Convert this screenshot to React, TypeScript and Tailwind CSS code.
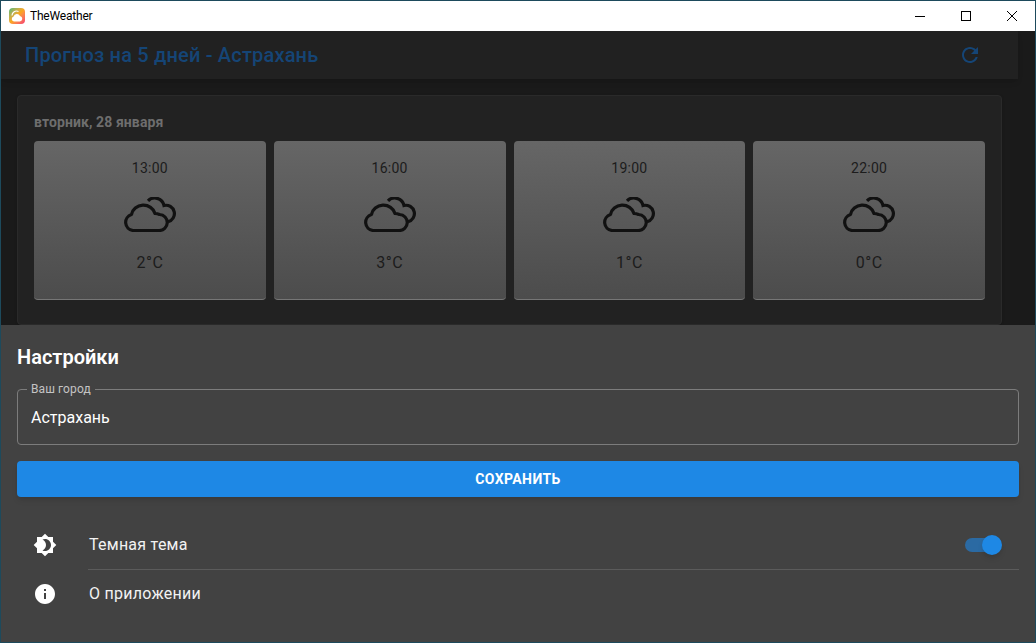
import React from 'react';

const forecast = [
  { time: '13:00', temp: '2°C' },
  { time: '16:00', temp: '3°C' },
  { time: '19:00', temp: '1°C' },
  { time: '22:00', temp: '0°C' },
];

function CloudsIcon() {
  return (
    <svg width="54" height="35" viewBox="0 0 54 35" fill="none" stroke="#111" strokeWidth="3.2">
      <path d="M10 33.5H36A8 8 0 0 0 36.5 17.5C35 16.8 33.5 16.5 32 16.5A12 11 0 0 0 8.5 17.5A8.2 8.2 0 0 0 10 33.5Z" strokeLinejoin="round" />
      <path d="M25 3.8A9.5 9.5 0 0 1 41 8.5A8 8 0 0 1 45 24.8" strokeLinecap="butt" />
    </svg>
  );
}

function AppLogo() {
  return (
    <div className="flex h-4 w-4 items-center justify-center rounded-[4px] bg-gradient-to-br from-[#2fb574] via-[#fba61b] to-[#f5326e]">
      <svg width="14" height="12" viewBox="0 0 14 12" fill="white">
        <path d="M2 5.5A4.5 4.5 0 0 1 8.5 1.5" fill="none" stroke="white" strokeWidth="1.2" />
        <path d="M4 11.5A2.5 2.5 0 0 1 3.6 6.6A3.4 3.4 0 0 1 10 6A2.8 2.8 0 0 1 10 11.5Z" />
      </svg>
    </div>
  );
}

function TitleBar() {
  return (
    <div className="flex h-[30px] shrink-0 items-center bg-white pl-2 text-black">
      <AppLogo />
      <span className="ml-[5px] text-xs tracking-[-0.2px]">TheWeather</span>
      <div className="ml-auto flex h-full">
        <div className="flex w-[46px] items-center justify-center">
          <div className="h-px w-[10px] bg-black" />
        </div>
        <div className="flex w-[46px] items-center justify-center">
          <div className="h-[10px] w-[10px] border border-black" />
        </div>
        <div className="flex w-[46px] items-center justify-center">
          <svg width="10" height="10" viewBox="0 0 10 10" stroke="black" strokeWidth="1">
            <path d="M0 0L10 10M10 0L0 10" />
          </svg>
        </div>
      </div>
    </div>
  );
}

function Forecast() {
  return (
    <div className="flex-1 overflow-hidden bg-[#1a1a1a]">
      <div className="mr-[17px] flex h-12 items-center justify-between bg-[#212121] pl-6 pr-9 shadow-md">
        <h1 className="text-xl font-medium tracking-[0.18px] text-[#154576]">Прогноз на 5 дней - Астрахань</h1>
        <svg width="24" height="24" viewBox="0 0 24 24" fill="#154576">
          <path d="M17.65 6.35C16.2 4.9 14.21 4 12 4c-4.42 0-7.99 3.58-7.99 8s3.57 8 7.99 8c3.73 0 6.84-2.55 7.73-6h-2.08c-.82 2.33-3.04 4-5.65 4-3.31 0-6-2.69-6-6s2.69-6 6-6c1.66 0 3.14.69 4.22 1.78L13 11h7V4l-2.35 2.35z" />
        </svg>
      </div>
      <div className="ml-4 mr-[33px] mt-4 rounded border border-[#2a2a2a] bg-[#222222] px-4 pb-6 pt-4 shadow">
        <div className="text-sm font-bold leading-5 tracking-[0.1px] text-[#6e6e6e]">вторник, 28 января</div>
        <div className="mt-[9px] grid grid-cols-4 gap-2">
          {forecast.map((item) => (
            <div
              key={item.time}
              className="flex h-[159px] flex-col items-center rounded border-b border-[#767676] bg-gradient-to-b from-[#666666] to-[#4c4c4c] pt-4 text-[#1c1c1c]"
            >
              <div className="text-sm leading-[22px] tracking-[0.25px]">{item.time}</div>
              <div className="mt-[18px]">
                <CloudsIcon />
              </div>
              <div className="mt-[19px] text-base leading-6 tracking-[0.5px]">{item.temp}</div>
            </div>
          ))}
        </div>
      </div>
    </div>
  );
}

function SettingsSheet() {
  return (
    <div className="absolute bottom-0 left-0 right-0 h-[317px] bg-[#424242] px-4 text-white">
      <h2 className="mt-[18px] text-xl font-semibold leading-[28px]">Настройки</h2>
      <fieldset className="mt-[11px] h-[63px] rounded border border-[#7c7c7c] px-[9px]">
        <legend className="px-1 text-xs leading-[14px] tracking-[0.1px] text-[#c4c4c4]">Ваш город</legend>
        <div className="pl-1 pt-[10px] text-base leading-6">Астрахань</div>
      </fieldset>
      <button className="mt-4 h-9 w-full rounded bg-[#1e88e5] text-sm font-bold tracking-[0.4px] text-white shadow-md">
        СОХРАНИТЬ
      </button>
      <div className="mt-6 flex h-12 items-center">
        <div className="w-[72px] pl-4">
          <svg width="24" height="24" viewBox="0 0 24 24" fill="white">
            <path d="M20 8.69V4h-4.69L12 .69 8.69 4H4v4.69L.69 12 4 15.31V20h4.69L12 23.31 15.31 20H20v-4.69L23.31 12 20 8.69zM12 18c-.89 0-1.74-.2-2.5-.55C11.56 16.5 13 14.42 13 12s-1.44-4.5-3.5-5.45C10.26 6.2 11.11 6 12 6c3.31 0 6 2.69 6 6s-2.69 6-6 6z" />
          </svg>
        </div>
        <span className="text-base tracking-[0.25px] text-[#f2f2f2]">Темная тема</span>
        <div className="relative ml-auto mr-5 h-[14px] w-[34px] rounded-full bg-[#2b6aa3]">
          <div className="absolute -top-[3px] right-[-3px] h-5 w-5 rounded-full bg-[#1e88e5] shadow-md" />
        </div>
      </div>
      <div className="ml-[71px] h-px bg-[#5b5b5b]" />
      <div className="flex h-12 items-center">
        <div className="w-[72px] pl-4">
          <svg width="24" height="24" viewBox="0 0 24 24" fill="white">
            <path d="M12 2C6.48 2 2 6.48 2 12s4.48 10 10 10 10-4.48 10-10S17.52 2 12 2zm1 15h-2v-6h2v6zm0-8h-2V7h2v2z" />
          </svg>
        </div>
        <span className="text-base tracking-[0.25px] text-[#f2f2f2]">О приложении</span>
      </div>
    </div>
  );
}

export default function App() {
  return (
    <div className="flex h-[643px] w-[1036px] flex-col overflow-hidden border border-[#1d4a5c] font-['Roboto',sans-serif]">
      <TitleBar />
      <div className="relative flex flex-1 flex-col overflow-hidden">
        <Forecast />
        <SettingsSheet />
      </div>
    </div>
  );
}
